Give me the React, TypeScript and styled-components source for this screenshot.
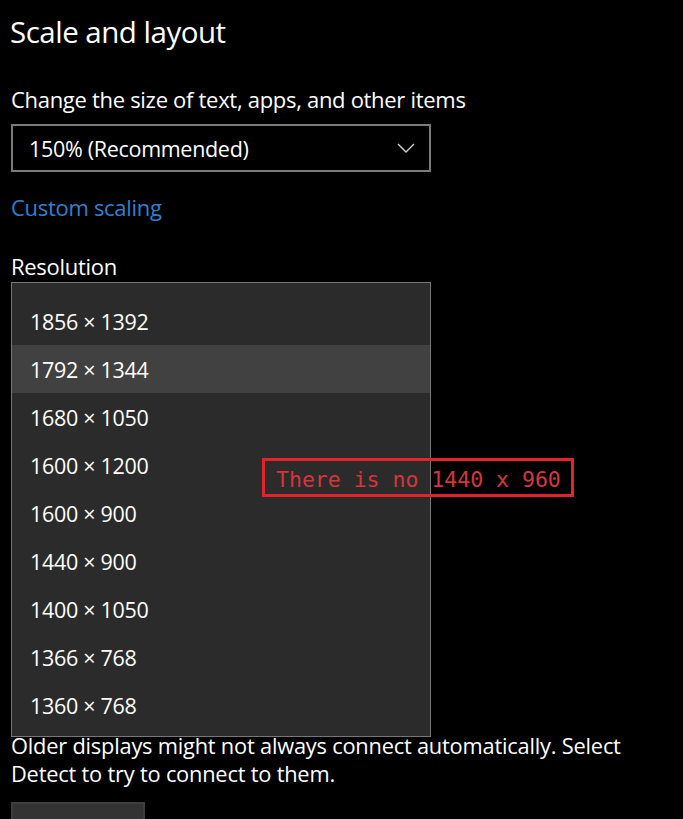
import React from "react";
import styled, { createGlobalStyle } from "styled-components";

const GlobalStyle = createGlobalStyle`
  html, body {
    margin: 0;
    padding: 0;
    background: #000;
  }
  body {
    font-family: "Open Sans", "Noto Sans", sans-serif;
    color: #fff;
    overflow: hidden;
  }
`;

const Page = styled.div`
  width: 683px;
  height: 819px;
  padding: 0 0 0 11px;
  box-sizing: border-box;
  overflow: hidden;
  background: #000;
`;

const Title = styled.h1`
  margin: 0 0 0 -1px;
  padding-top: 12px;
  font-size: 29.5px;
  font-weight: 400;
  line-height: 40px;
  letter-spacing: -0.5px;
`;

const Label = styled.div`
  margin-top: 33px;
  font-size: 22px;
  line-height: 28px;
  letter-spacing: -0.3px;
`;

const Select = styled.div`
  margin-top: 11px;
  width: 420px;
  height: 48px;
  box-sizing: border-box;
  border: 2px solid #7a7a7a;
  display: flex;
  align-items: center;
  justify-content: space-between;
  padding: 0 14px 0 16px;
  font-size: 21.5px;
  letter-spacing: -0.3px;
`;

const Link = styled.div`
  margin-top: 21px;
  color: #2f80d1;
  font-size: 22px;
  line-height: 28px;
  letter-spacing: -0.3px;
`;

const SubLabel = styled.div`
  margin-top: 31px;
  font-size: 22px;
  line-height: 28px;
  letter-spacing: -0.3px;
`;

const ListArea = styled.div`
  position: relative;
  margin-top: 2px;
`;

const List = styled.ul`
  margin: 0;
  width: 420px;
  box-sizing: border-box;
  list-style: none;
  padding: 14px 0 7px;
  background: #2b2b2b;
  border: 1px solid #777;
`;

const Item = styled.li<{ $active?: boolean }>`
  height: 48px;
  display: flex;
  align-items: center;
  padding-left: 18px;
  font-size: 21.5px;
  letter-spacing: -0.3px;
  background: ${(p) => (p.$active ? "#414141" : "transparent")};
`;

const Note = styled.div`
  position: absolute;
  left: 251px;
  top: 176px;
  width: 312px;
  height: 39px;
  box-sizing: border-box;
  border: 3px solid #e2232a;
  display: flex;
  align-items: center;
  padding: 3px 0 0 11px;
  color: #d9343b;
  font-family: "DejaVu Sans Mono", "Liberation Mono", monospace;
  font-size: 21.5px;
  white-space: pre;
`;

const Paragraph = styled.p`
  margin: -5px 0 0;
  font-size: 21.8px;
  line-height: 28px;
  letter-spacing: -0.2px;
  width: 640px;
`;

const Button = styled.div`
  margin-top: 14px;
  width: 134px;
  height: 48px;
  box-sizing: border-box;
  background: #333;
  border: 2px solid #3d3d3d;
  display: flex;
  align-items: center;
  justify-content: center;
  font-size: 21.5px;
  letter-spacing: -0.3px;
`;

const resolutions = [
  "1856 × 1392",
  "1792 × 1344",
  "1680 × 1050",
  "1600 × 1200",
  "1600 × 900",
  "1440 × 900",
  "1400 × 1050",
  "1366 × 768",
  "1360 × 768",
];

const Chevron = () => (
  <svg width="18" height="10" viewBox="0 0 18 10" fill="none">
    <path d="M1 1 L9 9 L17 1" stroke="#cfcfcf" strokeWidth="1.4" />
  </svg>
);

export default function App() {
  return (
    <Page>
      <GlobalStyle />
      <Title>Scale and layout</Title>
      <Label>Change the size of text, apps, and other items</Label>
      <Select>
        <span>150% (Recommended)</span>
        <Chevron />
      </Select>
      <Link>Custom scaling</Link>
      <SubLabel>Resolution</SubLabel>
      <ListArea>
        <List>
          {resolutions.map((r, i) => (
            <Item key={r} $active={i === 1}>
              {r}
            </Item>
          ))}
        </List>
        <Note>There is no 1440 x 960</Note>
      </ListArea>
      <Paragraph>
        Older displays might not always connect automatically. Select Detect to
        try to connect to them.
      </Paragraph>
      <Button>Detect</Button>
    </Page>
  );
}
